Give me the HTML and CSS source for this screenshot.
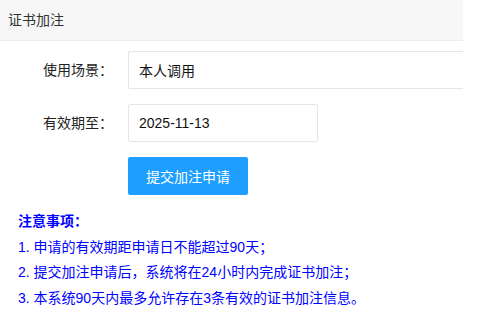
FILE: index.html
```html
<!DOCTYPE html>
<html lang="zh-CN">

<head>
  <meta charset="UTF-8" />
  <meta name="viewport" content="width=device-width, initial-scale=1.0" />
  <title>证书加注</title>
  <link rel="stylesheet" href="styles.css">
</head>

<body>
  <div class="panel">
    <div class="panel-header">证书加注</div>

    <form class="panel-body" onsubmit="return false">
      <div class="form-item">
        <label class="form-label">使用场景：</label>
        <div class="input-block">
          <input type="text" class="form-input" value="本人调用" readonly />
        </div>
      </div>

      <div class="form-item">
        <label class="form-label">有效期至：</label>
        <div class="input-inline">
          <input type="text" class="form-input" value="2025-11-13" />
        </div>
      </div>

      <div class="form-item">
        <div class="input-block">
          <button type="submit" class="btn-primary">提交加注申请</button>
        </div>
      </div>

      <div class="notice">
        <p class="notice-title">注意事项：</p>
        <p>1. 申请的有效期距申请日不能超过90天；</p>
        <p>2. 提交加注申请后，系统将在24小时内完成证书加注；</p>
        <p>3. 本系统90天内最多允许存在3条有效的证书加注信息。</p>
      </div>
    </form>
  </div>
</body>

</html>
```

FILE: styles.css
```css
* {
  margin: 0;
  padding: 0;
  box-sizing: border-box;
  font-family: "Liberation Sans", "Noto Sans CJK SC", sans-serif;
}

body {
  background: #ffffff;
  color: #333333;
}

.panel {
  width: 463px;
  overflow: hidden;
}

.panel-header {
  height: 41px;
  line-height: 40px;
  padding: 0 8px;
  background: #f7f7f7;
  border-bottom: 1px solid #ebebeb;
  font-size: 14px;
  color: #333333;
}

.panel-body {
  padding: 10px 18px 0;
}

.form-item {
  display: flex;
  margin-bottom: 15px;
}

.form-label {
  width: 110px;
  flex-shrink: 0;
  padding: 9px 15px;
  line-height: 20px;
  text-align: right;
  font-size: 14px;
  color: #222222;
}

.input-block {
  margin-left: 110px;
  width: 420px;
  flex-shrink: 0;
}

.form-label + .input-block {
  margin-left: 0;
}

.input-inline {
  width: 190px;
}

.form-input {
  width: 100%;
  height: 38px;
  padding-left: 10px;
  border: 1px solid #e6e6e6;
  border-radius: 2px;
  background: #ffffff;
  font-size: 14px;
  color: #111111;
  outline: none;
}

.btn-primary {
  height: 38px;
  padding: 0 18px;
  background: #1e9fff;
  color: #ffffff;
  border: none;
  border-radius: 2px;
  font-size: 14px;
  cursor: pointer;
}

.notice {
  margin-top: -1px;
  color: #0000ff;
  font-size: 14px;
  line-height: 25.5px;
}

.notice-title {
  font-weight: bold;
}
```
